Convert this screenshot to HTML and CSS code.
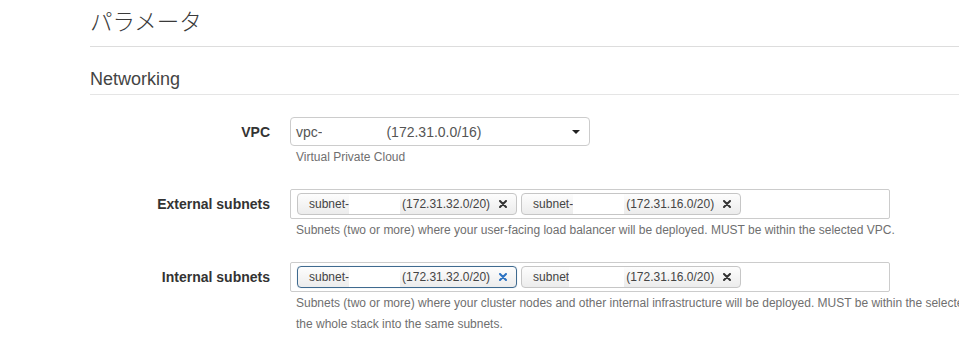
FILE: index.html
```html
<!DOCTYPE html>
<html lang="ja">
<head>
<meta charset="utf-8">
<title>パラメータ</title>
<link rel="stylesheet" href="styles.css">
</head>
<body>
<div class="page">
  <h1 class="title">パラメータ</h1>
  <h2 class="section">Networking</h2>

  <div class="field">
    <label class="label">VPC</label>
    <div class="select">
      <span class="sel-text">vpc-<span class="mask mask-vpc"></span>(172.31.0.0/16)</span>
      <span class="caret"></span>
    </div>
    <div class="help">Virtual Private Cloud</div>
  </div>

  <div class="field">
    <label class="label">External subnets</label>
    <div class="tags wide">
      <span class="tag"><span class="tag-id">subnet-</span><span class="mask m1"></span><span class="tag-cidr">(172.31.32.0/20)</span><svg class="x" viewBox="0 0 8 8"><path d="M1 1L7 7M7 1L1 7"/></svg></span>
      <span class="tag"><span class="tag-id">subnet-</span><span class="mask m2"></span><span class="tag-cidr">(172.31.16.0/20)</span><svg class="x" viewBox="0 0 8 8"><path d="M1 1L7 7M7 1L1 7"/></svg></span>
    </div>
    <div class="help">Subnets (two or more) where your user-facing load balancer will be deployed. MUST be within the selected VPC.</div>
  </div>

  <div class="field">
    <label class="label">Internal subnets</label>
    <div class="tags wide">
      <span class="tag focus"><span class="tag-id">subnet-</span><span class="mask m1"></span><span class="tag-cidr">(172.31.32.0/20)</span><svg class="x" viewBox="0 0 8 8"><path d="M1 1L7 7M7 1L1 7"/></svg></span>
      <span class="tag"><span class="tag-id">subnet</span><span class="mask m3"></span><span class="tag-cidr">(172.31.16.0/20)</span><svg class="x" viewBox="0 0 8 8"><path d="M1 1L7 7M7 1L1 7"/></svg></span>
    </div>
    <div class="help long">Subnets (two or more) where your cluster nodes and other internal infrastructure will be deployed. MUST be within the selected VPC. Specify external subnets to deploy<br>the whole stack into the same subnets.</div>
  </div>
</div>
</body>
</html>
```

FILE: styles.css
```css
html, body {
  margin: 0;
  padding: 0;
  background: #fff;
  overflow: hidden;
}

body {
  font-family: "Liberation Sans", Arial, sans-serif;
  color: #333;
  width: 959px;
  height: 345px;
}

.page {
  margin-left: 90px;
  width: 869px;
}

.title {
  margin: 0;
  padding: 4px 0 10px;
  font-family: "Noto Sans CJK JP", "Liberation Sans", sans-serif;
  font-weight: 300;
  font-size: 22.5px;
  line-height: 32px;
  color: #3a3a3a;
  border-bottom: 1px solid #ddd;
}

.section {
  margin: 22px 0 0;
  padding: 0 0 5px;
  font-size: 18px;
  font-weight: normal;
  line-height: 20px;
  color: #444;
  border-bottom: 1px solid #e5e5e5;
}

.field {
  display: grid;
  grid-template-columns: 180px auto;
  column-gap: 20px;
  align-items: center;
  margin-top: 22px;
}

.label {
  grid-column: 1;
  grid-row: 1;
  text-align: right;
  font-weight: bold;
  font-size: 14px;
  color: #333;
}

.select {
  grid-column: 2;
  grid-row: 1;
  width: 300px;
  height: 29px;
  box-sizing: border-box;
  border: 1px solid #ccc;
  border-radius: 4px;
  display: flex;
  align-items: center;
  padding: 0 9px 0 5px;
  font-size: 14px;
  color: #555;
}

.sel-text {
  flex: 1;
  white-space: nowrap;
  display: flex;
  align-items: center;
}

.mask {
  display: inline-block;
  height: 14px;
  background: #fff;
}

.mask-vpc { width: 64px; }

.caret {
  width: 0;
  height: 0;
  border-left: 4px solid transparent;
  border-right: 4px solid transparent;
  border-top: 4px solid #222;
}

.tags {
  grid-column: 2;
  grid-row: 1;
  width: 600px;
  height: 30px;
  box-sizing: border-box;
  border: 1px solid #ccc;
  border-radius: 2px;
  padding: 3px 6px;
  display: flex;
  gap: 4px;
  align-items: center;
}

.tag {
  display: flex;
  align-items: center;
  height: 22px;
  box-sizing: border-box;
  padding: 0 9px 0 11px;
  border: 1px solid #c6c6c6;
  border-radius: 4px;
  background: linear-gradient(#fdfdfd, #ececec);
  font-size: 12px;
  color: #444;
  white-space: nowrap;
}

.tag .mask {
  background: #fff;
  height: 20px;
}

.m1 { width: 51px; }
.m2 { width: 51px; }
.m3 { width: 55px; }

.tag-cidr { margin-left: 2px; }

.x {
  width: 8px;
  height: 8px;
  margin-left: 9px;
  fill: none;
  stroke: #333;
  stroke-width: 2;
  stroke-linecap: round;
}

.tag.focus {
  border-color: #3f6a8f;
  box-shadow: 0 0 1px rgba(63, 106, 143, 0.4);
}

.tag.focus .x {
  stroke: #2b72c2;
}

.help {
  grid-column: 2;
  grid-row: 2;
  margin-top: 1px;
  padding-left: 6px;
  font-size: 12px;
  line-height: 20px;
  color: #6f6f6f;
  white-space: nowrap;
}

.help.long {
  line-height: 21px;
}
```
